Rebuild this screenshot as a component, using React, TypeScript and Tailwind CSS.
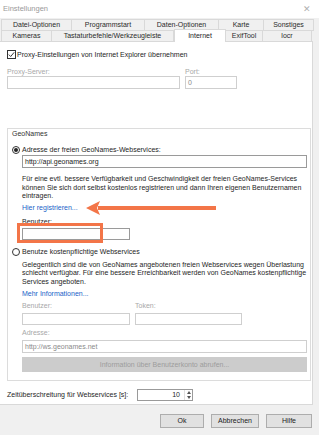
import React from "react";

const Tab = ({
  label,
  w,
  active = false,
}: {
  label: string;
  w: string;
  active?: boolean;
}) => {
  if (active) {
    return (
      <div
        className={`${w} h-[13px] -mt-[1px] relative z-10 bg-white border border-b-0 border-[#d9d9d9] flex items-center justify-center text-[#1e1e1e]`}
      >
        {label}
      </div>
    );
  }
  return (
    <div
      className={`${w} h-[12px] bg-[#f0f0f0] border border-[#d9d9d9] -ml-[1px] first:ml-0 flex items-center justify-center text-[#2b2b2b]`}
    >
      {label}
    </div>
  );
};

const Radio = ({ checked = false }: { checked?: boolean }) => (
  <div className="w-[8px] h-[8px] rounded-full border border-[#333] bg-white flex items-center justify-center shrink-0">
    {checked && <div className="w-[4px] h-[4px] rounded-full bg-[#222]" />}
  </div>
);

const Input = ({
  w,
  h = "h-[13px]",
  value,
  disabled = false,
  className = "",
}: {
  w: string;
  h?: string;
  value?: string;
  disabled?: boolean;
  className?: string;
}) => (
  <div
    className={`${w} ${h} border ${
      disabled ? "border-[#cfcfcf] text-[#8a8a8a]" : "border-[#9a9a9a] text-[#222]"
    } bg-white flex items-center px-[2px] ${className}`}
  >
    {value}
  </div>
);

const Button = ({ label, w }: { label: string; w: string }) => (
  <div
    className={`${w} h-[14px] bg-[#e1e1e1] border border-[#adadad] flex items-center justify-center text-[#222]`}
  >
    {label}
  </div>
);

export default function App() {
  return (
    <div className="relative w-[319px] h-[435px] overflow-hidden bg-[#f0f0f0] font-['Liberation_Sans',Arial,sans-serif] text-[7px] leading-[8px]">
      {/* Title bar */}
      <div className="h-[18px] bg-white flex items-center justify-between pl-[3px] pr-[8px] text-[#9a9a9a] text-[7.5px]">
        <span>Einstellungen</span>
        <span className="text-[9px] text-[#b0b0b0]">✕</span>
      </div>

      {/* Tabs */}
      <div className="mt-[1px] pl-[1px] flex">
        <Tab label="Datei-Optionen" w="w-[71px]" />
        <Tab label="Programmstart" w="w-[74px]" />
        <Tab label="Daten-Optionen" w="w-[75px]" />
        <Tab label="Karte" w="w-[46px]" />
        <Tab label="Sonstiges" w="w-[51px]" />
      </div>
      <div className="pl-[1px] flex -mt-[1px]">
        <Tab label="Kameras" w="w-[51px]" />
        <Tab label="Tastaturbefehle/Werkzeugleiste" w="w-[123px]" />
        <Tab label="Internet" w="w-[52px]" active />
        <Tab label="ExifTool" w="w-[38px]" />
        <Tab label="locr" w="w-[50px]" />
      </div>

      {/* Tab page */}
      <div className="-mt-[1px] w-[313px] h-[364px] bg-white border border-l-0 border-[#d9d9d9] flex flex-col text-[#1e1e1e]">
        <div className="mt-[8px] ml-[7px] flex items-center gap-[1px] h-[9px]">
          <div className="w-[9px] h-[9px] border border-[#333] bg-white flex items-center justify-center">
            <svg width="7" height="7" viewBox="0 0 7 7">
              <path d="M0.8 3.6 L2.7 5.5 L6.2 1.3" fill="none" stroke="#222" strokeWidth="0.9" />
            </svg>
          </div>
          <span>Proxy-Einstellungen von Internet Explorer übernehmen</span>
        </div>

        <div className="mt-[9px] ml-[7px] flex h-[8px] text-[#a8a8a8]">
          <span className="w-[178px]">Proxy-Server:</span>
          <span>Port:</span>
        </div>
        <div className="ml-[7px] flex gap-[5px]">
          <Input w="w-[173px]" disabled />
          <Input w="w-[52px]" value="0" disabled />
        </div>

        {/* GeoNames group */}
        <div className="mt-[39px] ml-[7px] w-[304px] h-[253px] border border-[#dcdcdc] flex flex-col pl-[4px]">
          <div className="h-[8px] mt-[1px] text-[#333]">GeoNames</div>

          <div className="mt-[8px] h-[8px] flex items-center gap-[2px]">
            <Radio checked />
            <span>Adresse der freien GeoNames-Webservices:</span>
          </div>
          <Input w="w-[285px]" value="http://api.geonames.org" className="ml-[10px] mt-[1px]" />

          <div className="ml-[10px] mt-[7px] leading-[8.5px] w-[290px]">
            Für eine evtl. bessere Verfügbarkeit und Geschwindigkeit der freien GeoNames-Services
            <br />
            können Sie sich dort selbst kostenlos registrieren und dann Ihren eigenen Benutzernamen
            <br />
            eintragen.
          </div>
          <div className="ml-[10px] mt-[3.5px] h-[8px] text-[#1a5fc8]">Hier registrieren...</div>

          <div className="ml-[10px] mt-[6px] h-[8px]">Benutzer:</div>
          <Input w="w-[108px]" h="h-[12px]" className="ml-[10px] mt-[2px]" />

          <div className="mt-[8px] h-[8px] flex items-center gap-[2px]">
            <Radio />
            <span>Benutze kostenpflichtige Webservices</span>
          </div>
          <div className="ml-[10px] mt-[4.75px] leading-[8.5px] w-[290px]">
            Gelegentlich sind die von GeoNames angebotenen freien Webservices wegen Überlastung
            <br />
            schlecht verfügbar. Für eine bessere Erreichbarkeit werden von GeoNames kostenpflichtige
            <br />
            Services angeboten.
          </div>
          <div className="ml-[10px] mt-[3.75px] h-[8px] text-[#1a5fc8]">Mehr Informationen...</div>

          <div className="ml-[10px] mt-[4px] h-[8px] flex text-[#a8a8a8]">
            <span className="w-[113px]">Benutzer:</span>
            <span>Token:</span>
          </div>
          <div className="ml-[10px] mt-[3px] flex gap-[5px]">
            <Input w="w-[108px]" h="h-[12px]" disabled />
            <Input w="w-[107px]" h="h-[12px]" disabled />
          </div>

          <div className="ml-[10px] mt-[4px] h-[8px] text-[#a8a8a8]">Adresse:</div>
          <Input
            w="w-[285px]"
            value="http://ws.geonames.net"
            disabled
            className="ml-[10px] mt-[3px]"
          />
          <div className="ml-[10px] mt-[4px] w-[285px] h-[15px] bg-[#cccccc] flex items-center justify-center text-[#9c9c9c]">
            Information über Benutzerkonto abrufen...
          </div>
        </div>

        <div className="mt-[8px] ml-[7px] flex items-center h-[12px]">
          <span className="w-[130px]">Zeitüberschreitung für Webservices [s]:</span>
          <div className="w-[56px] h-[12px] border border-[#9a9a9a] flex">
            <div className="flex-1 flex items-center justify-end pr-[4px]">10</div>
            <div className="w-[8px] flex flex-col border-l border-[#e0e0e0]">
              <div className="flex-1 flex items-center justify-center">
                <svg width="4" height="3" viewBox="0 0 4 3">
                  <path d="M0 3 L2 0 L4 3 Z" fill="#555" />
                </svg>
              </div>
              <div className="flex-1 flex items-center justify-center">
                <svg width="4" height="3" viewBox="0 0 4 3">
                  <path d="M0 0 L4 0 L2 3 Z" fill="#555" />
                </svg>
              </div>
            </div>
          </div>
        </div>
      </div>

      {/* Dialog buttons */}
      <div className="mt-[9px] flex justify-end gap-[7px] pr-[7px]">
        <Button label="Ok" w="w-[44px]" />
        <Button label="Abbrechen" w="w-[48px]" />
        <Button label="Hilfe" w="w-[46px]" />
      </div>

      {/* Annotation overlays */}
      <svg
        className="absolute left-[86px] top-[200px]"
        width="132"
        height="16"
        viewBox="0 0 132 16"
      >
        <path d="M12 6 L130 6 L130 10 L12 10 Z" fill="#f37548" />
        <path d="M0 8 L14 1 L11 8 L14 15 Z" fill="#f37548" />
      </svg>
      <div className="absolute left-[17px] top-[223px] w-[86px] h-[20px] border-[3px] border-[#f37548]" />
    </div>
  );
}
